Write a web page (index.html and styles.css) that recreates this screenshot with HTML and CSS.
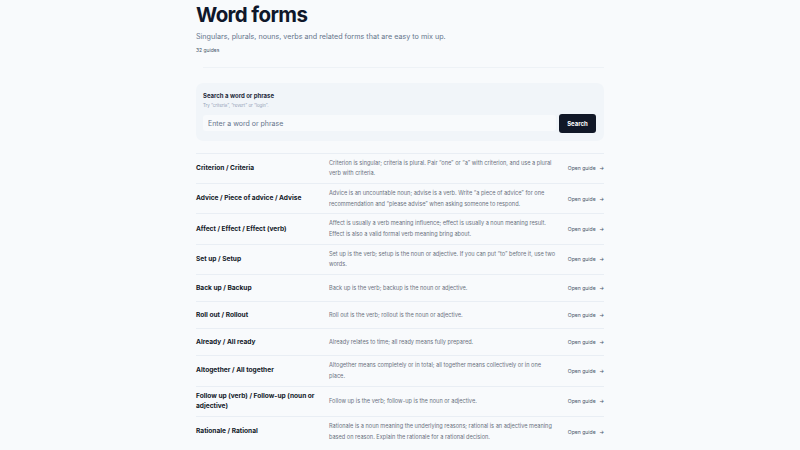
FILE: index.html
```html
<!DOCTYPE html>
<html lang="en">
<head>
<meta charset="utf-8">
<title>Word forms</title>
<link rel="stylesheet" href="styles.css">
</head>
<body>
<main class="page">
  <header class="intro">
    <h1 class="title">Word forms</h1>
    <p class="lead">Singulars, plurals, nouns, verbs and related forms that are easy to mix up.</p>
    <p class="count">32 guides</p>
  </header>
  <hr class="rule">
  <section class="search">
    <div class="search-label">Search a word or phrase</div>
    <div class="search-hint">Try “criteria”, “revert” or “login”.</div>
    <form class="search-row">
      <input class="search-input" type="text" placeholder="Enter a word or phrase">
      <button class="search-btn" type="button">Search</button>
    </form>
  </section>
  <ul class="list">
    <li class="row"><span class="term">Criterion / Criteria</span><span class="desc">Criterion is singular; criteria is plural. Pair “one” or “a” with criterion, and use a plural verb with criteria.</span><a class="open">Open guide <span class="arrow">→</span></a></li>
    <li class="row"><span class="term">Advice / Piece of advice / Advise</span><span class="desc">Advice is an uncountable noun; advise is a verb. Write “a piece of advice” for one recommendation and “please advise” when asking someone to respond.</span><a class="open">Open guide <span class="arrow">→</span></a></li>
    <li class="row"><span class="term">Affect / Effect / Effect (verb)</span><span class="desc">Affect is usually a verb meaning influence; effect is usually a noun meaning result. Effect is also a valid formal verb meaning bring about.</span><a class="open">Open guide <span class="arrow">→</span></a></li>
    <li class="row"><span class="term">Set up / Setup</span><span class="desc">Set up is the verb; setup is the noun or adjective. If you can put “to” before it, use two words.</span><a class="open">Open guide <span class="arrow">→</span></a></li>
    <li class="row"><span class="term">Back up / Backup</span><span class="desc">Back up is the verb; backup is the noun or adjective.</span><a class="open">Open guide <span class="arrow">→</span></a></li>
    <li class="row"><span class="term">Roll out / Rollout</span><span class="desc">Roll out is the verb; rollout is the noun or adjective.</span><a class="open">Open guide <span class="arrow">→</span></a></li>
    <li class="row"><span class="term">Already / All ready</span><span class="desc">Already relates to time; all ready means fully prepared.</span><a class="open">Open guide <span class="arrow">→</span></a></li>
    <li class="row"><span class="term">Altogether / All together</span><span class="desc">Altogether means completely or in total; all together means collectively or in one place.</span><a class="open">Open guide <span class="arrow">→</span></a></li>
    <li class="row"><span class="term">Follow up (verb) / Follow-up (noun or adjective)</span><span class="desc">Follow up is the verb; follow-up is the noun or adjective.</span><a class="open">Open guide <span class="arrow">→</span></a></li>
    <li class="row"><span class="term">Rationale / Rational</span><span class="desc">Rationale is a noun meaning the underlying reasons; rational is an adjective meaning based on reason. Explain the rationale for a rational decision.</span><a class="open">Open guide <span class="arrow">→</span></a></li>
  </ul>
</main>
</body>
</html>
```
FILE: styles.css
```css
* { box-sizing: border-box; }
html, body {
  margin: 0;
  padding: 0;
  background: #f8fafc;
  color: #0f172a;
  font-family: Inter, "Noto Sans", "Liberation Sans", sans-serif;
}
.page {
  width: 408px;
  margin: 0 auto;
  padding-top: 2px;
}
.title {
  margin: 0;
  font-size: 20.5px;
  line-height: 26px;
  font-weight: 700;
  letter-spacing: -0.03em;
  color: #0f172a;
}
.lead {
  margin: 3px 0 0;
  font-size: 7.2px;
  line-height: 12px;
  color: #64748b;
}
.count {
  margin: 3px 0 0;
  font-size: 5px;
  line-height: 8px;
  color: #475569;
}
.rule {
  margin: 13px 0 0 7px;
  border: 0;
  border-top: 1px solid #eef2f6;
}
.search {
  margin-top: 15px;
  background: #f1f5f9;
  border-radius: 7px;
  padding: 9px 8px 8px 7px;
}
.search-label {
  font-size: 6px;
  line-height: 8px;
  font-weight: 700;
  color: #1e293b;
}
.search-hint {
  margin-top: 1.5px;
  font-size: 4.4px;
  line-height: 7px;
  color: #94a3b8;
}
.search-row {
  display: flex;
  align-items: center;
  gap: 3px;
  margin: 5px 0 0;
}
.search-input {
  flex: 1;
  height: 16px;
  border: 0;
  border-radius: 3px;
  background: #f8fafc;
  padding: 0 5px;
  font-family: inherit;
  font-size: 7px;
  color: #0f172a;
}
.search-input::placeholder { color: #64748b; }
.search-btn {
  width: 37px;
  height: 19px;
  border: 0;
  border-radius: 3px;
  background: #111827;
  color: #fff;
  font-family: inherit;
  font-size: 6px;
  font-weight: 700;
  padding: 0;
}
.list {
  list-style: none;
  margin: 12px 0 0;
  padding: 0;
}
.row {
  display: grid;
  grid-template-columns: 128px 1fr 40px;
  column-gap: 5px;
  align-items: center;
  padding: 4px 0;
  border-top: 1px solid #e9eef4;
}
.term {
  font-size: 6.6px;
  line-height: 10.7px;
  font-weight: 700;
  color: #111827;
}
.desc {
  font-size: 5.6px;
  line-height: 10.7px;
  color: #6b7280;
  padding-right: 2px;
}
.open {
  padding: 4px 0;
  font-size: 5.1px;
  line-height: 10px;
  color: #475569;
  white-space: nowrap;
  text-align: right;
}
.arrow { margin-left: 2px; }
```
